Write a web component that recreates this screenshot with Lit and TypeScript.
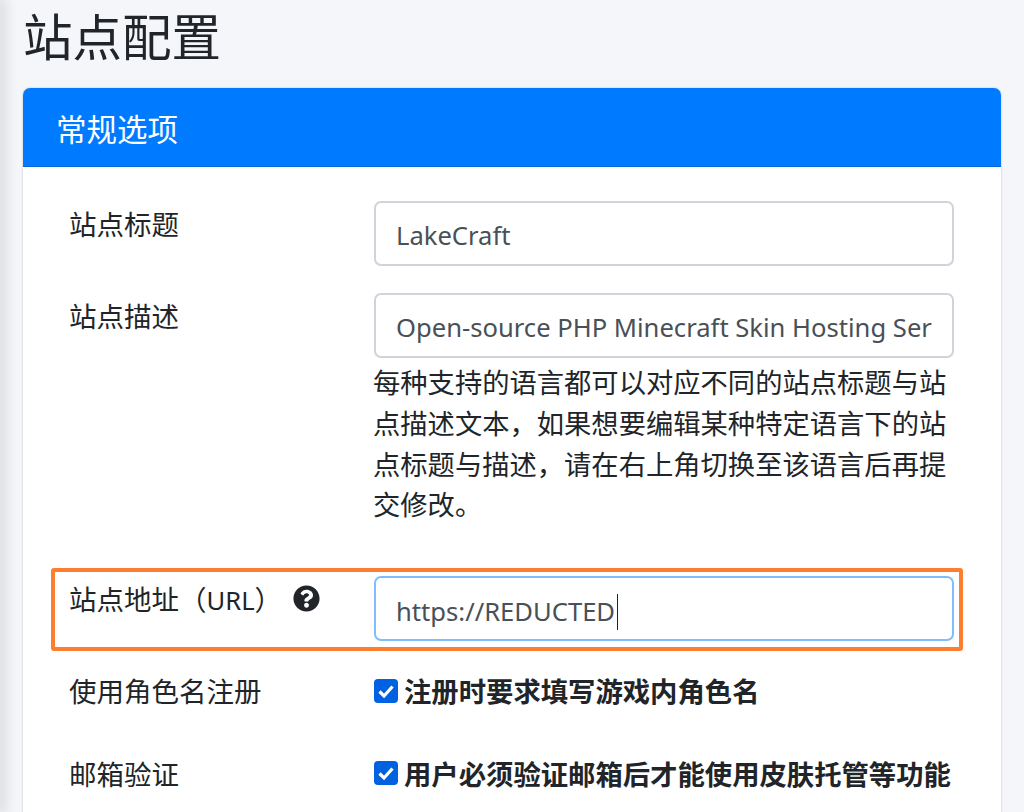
import { LitElement, html, css, svg } from "lit";
import { customElement } from "lit/decorators.js";

const QUESTION = svg`<path fill="#212529" d="M504 256c0 136.997-111.043 248-248 248S8 392.997 8 256C8 119.083 119.043 8 256 8s248 111.083 248 248zM262.655 90c-54.497 0-89.255 22.957-116.549 63.758-3.536 5.286-2.353 12.415 2.715 16.258l34.699 26.31c5.205 3.947 12.621 3.008 16.665-2.122 17.864-22.658 30.113-35.797 57.303-35.797 20.429 0 45.698 13.148 45.698 32.958 0 14.976-12.363 22.667-32.534 33.976C247.128 238.528 216 254.941 216 296v4c0 6.627 5.373 12 12 12h56c6.627 0 12-5.373 12-12v-1.333c0-28.462 83.186-29.647 83.186-106.667 0-58.002-60.165-102-116.531-102zM256 338c-25.365 0-46 20.635-46 46 0 25.364 20.635 46 46 46s46-20.636 46-46c0-25.365-20.635-46-46-46z"/>`;

@customElement("app-root")
export class AppRoot extends LitElement {
  static styles = css`
    :host {
      display: block;
      position: relative;
      height: 812px;
      overflow: hidden;
      background: #f4f6f9;
      color: #212529;
      font-family: "Noto Sans", "Noto Sans CJK SC", sans-serif;
      font-size: 27.5px;
      line-height: 40.8px;
      padding: 0 23px;
      box-sizing: border-box;
    }
    .edge {
      position: absolute;
      left: 0;
      top: 0;
      bottom: 0;
      width: 0;
      box-shadow: 0 0 14px 3px rgba(0, 0, 0, 0.22);
    }
    h1 {
      margin: 0;
      height: 88px;
      box-sizing: border-box;
      padding-top: 6px;
      font-size: 49.5px;
      line-height: 58.8px;
      font-weight: 400;
      font-family: "Noto Sans CJK SC", sans-serif;
    }
    .card {
      background: #fff;
      border-radius: 7px 7px 0 0;
      box-shadow: 0 0 2px rgba(0, 0, 0, 0.25);
      height: 760px;
    }
    .head {
      height: 79px;
      box-sizing: border-box;
      background: #007bff;
      color: #fff;
      border-radius: 7px 7px 0 0;
      border-bottom: 1px solid #0069d9;
      padding: 0 33px;
      font-size: 30.5px;
      line-height: 80px;
      font-family: "Noto Sans CJK SC", sans-serif;
    }
    .body {
      padding: 34px 47px 0 46px;
    }
    .row {
      display: grid;
      grid-template-columns: 305px minmax(0, 1fr);
      margin-bottom: 27px;
      position: relative;
    }
    .row.check {
      margin-bottom: 40px;
    }
    .row.url {
      margin-top: 52px;
      margin-bottom: 27px;
    }
    .lab {
      display: flex;
      align-items: flex-start;
      font-family: "Noto Sans CJK SC", sans-serif;
      padding-top: 2px;
    }
    .latin {
      font-family: "Noto Sans", sans-serif;
      font-size: 25.6px;
    }
    .q {
      width: 27px;
      height: 27px;
      margin: 7px 0 0 11px;
      flex: none;
    }
    .input {
      height: 65px;
      box-sizing: border-box;
      border: 2px solid #ced4da;
      border-radius: 7px;
      padding: 0 0 0 20px;
      color: #495057;
      font-size: 25.6px;
      line-height: 66px;
      white-space: nowrap;
    }
    .input.focus {
      border-color: #80bdff;
      line-height: 68px;
    }
    .caret {
      display: inline-block;
      width: 1px;
      height: 36px;
      margin-left: 2px;
      background: #212529;
      vertical-align: -9px;
    }
    .help {
      font-family: "Noto Sans CJK SC", sans-serif;
      font-size: 27.3px;
      margin: 3px 0 0 -1px;
    }
    .opt {
      display: flex;
      align-items: center;
      gap: 6px;
      padding-top: 2px;
      font-weight: 700;
      font-size: 27.35px;
      font-family: "Noto Sans CJK SC", sans-serif;
      white-space: nowrap;
    }
    .box {
      width: 24px;
      height: 24px;
      border-radius: 4px;
      background: #0062e0;
      flex: none;
    }
    .box svg {
      display: block;
    }
    .mark {
      position: absolute;
      left: -18px;
      right: -9px;
      top: -8px;
      bottom: -10px;
      border: 4px solid #fd7e2f;
      border-radius: 3px;
      pointer-events: none;
    }
  `;

  private check() {
    return html`<span class="box"><svg width="24" height="24" viewBox="0 0 24 24"><path d="M5.5 12.5 10 17l8.500-9.500" fill="none" stroke="#fff" stroke-width="3.200"/></svg></span>`;
  }

  render() {
    return html`
      <div class="edge"></div>
      <h1>站点配置</h1>
      <section class="card">
        <div class="head">常规选项</div>
        <div class="body">
          <div class="row">
            <div class="lab">站点标题</div>
            <div class="input">LakeCraft</div>
          </div>
          <div class="row">
            <div class="lab">站点描述</div>
            <div>
              <div class="input">Open-source PHP Minecraft Skin Hosting Ser</div>
              <div class="help">每种支持的语言都可以对应不同的站点标题与站点描述文本，如果想要编辑某种特定语言下的站点标题与描述，请在右上角切换至该语言后再提交修改。</div>
            </div>
          </div>
          <div class="row url">
            <div class="lab"><span>站点地址（<span class="latin">URL</span>）</span><svg class="q" viewBox="0 0 512 512">${QUESTION}</svg></div>
            <div class="input focus">https://REDUCTED<span class="caret"></span></div>
            <div class="mark"></div>
          </div>
          <div class="row check">
            <div class="lab">使用角色名注册</div>
            <div class="opt">${this.check()}注册时要求填写游戏内角色名</div>
          </div>
          <div class="row check">
            <div class="lab">邮箱验证</div>
            <div class="opt">${this.check()}用户必须验证邮箱后才能使用皮肤托管等功能</div>
          </div>
        </div>
      </section>
    `;
  }
}
